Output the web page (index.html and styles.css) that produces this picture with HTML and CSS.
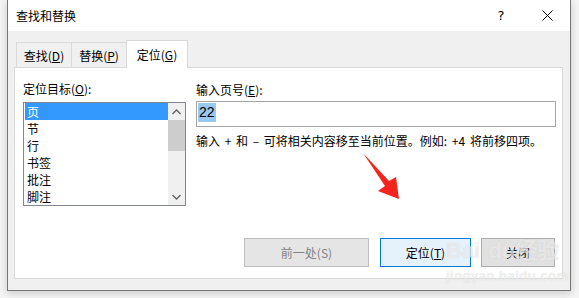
FILE: index.html
```html
<!DOCTYPE html>
<html lang="zh-CN">
<head>
    <meta charset="UTF-8">
    <title>查找和替换</title>
    <link rel="stylesheet" href="styles.css">
</head>
<body>
    <div class="dialog">
        <div class="titlebar">
            <span class="title">查找和替换</span>
            <span class="tb-btn">?</span>
            <span class="tb-btn">
                <svg width="11" height="11" viewBox="0 0 11 11"><path d="M0.5 0.5 L10.5 10.5 M10.5 0.5 L0.5 10.5" stroke="#000" stroke-width="1" fill="none"/></svg>
            </span>
        </div>
        <div class="content">
            <div class="tabs">
                <div class="tab">查找(<u>D</u>)</div>
                <div class="tab">替换(<u>P</u>)</div>
                <div class="tab active">定位(<u>G</u>)</div>
            </div>
            <div class="panel">
                <div class="fields">
                    <div class="col">
                        <div class="label">定位目标(<u>O</u>):</div>
                        <div class="listbox">
                            <ul class="items">
                                <li class="selected">页</li>
                                <li>节</li>
                                <li>行</li>
                                <li>书签</li>
                                <li>批注</li>
                                <li>脚注</li>
                            </ul>
                            <div class="scrollbar">
                                <div class="sb-arrow">
                                    <svg width="9" height="6" viewBox="0 0 9 6"><path d="M0.5 5 L4.5 1 L8.5 5" stroke="#606060" stroke-width="1.3" fill="none"/></svg>
                                </div>
                                <div class="sb-thumb"></div>
                                <div class="sb-space"></div>
                                <div class="sb-arrow">
                                    <svg width="9" height="6" viewBox="0 0 9 6"><path d="M0.5 1 L4.5 5 L8.5 1" stroke="#606060" stroke-width="1.3" fill="none"/></svg>
                                </div>
                            </div>
                        </div>
                    </div>
                    <div class="col">
                        <div class="label label-right">输入页号(<u>E</u>):</div>
                        <div class="input"><span class="sel">22</span></div>
                        <div class="hint">输入 + 和 – 可将相关内容移至当前位置。例如: +4 将前移四项。</div>
                    </div>
                </div>
                <div class="buttons">
                    <div class="btn disabled">前一处(S)</div>
                    <div class="btn primary">定位(<u>T</u>)</div>
                    <div class="btn close-btn">关闭</div>
                </div>
            </div>
        </div>
    </div>

    <svg class="arrow" width="579" height="298" viewBox="0 0 579 298">
        <polygon points="363,153 389,181 396,177 399,199 378,191 385,186" fill="#f5241c"/>
    </svg>

    <div class="watermark">
        <div class="wm-logo">Bai<span class="wm-paw">du</span>经验</div>
        <div class="wm-url">jingyan.baidu.com</div>
    </div>
</body>
</html>
```

FILE: styles.css
```css
body {
    margin: 0;
    width: 579px;
    height: 298px;
    background: #f4f4f4;
    font-family: "Noto Sans CJK SC", "Microsoft YaHei", sans-serif;
    font-size: 12px;
    color: #000;
    position: relative;
    overflow: hidden;
}
.dialog {
    box-sizing: border-box;
    margin-left: 7px;
    width: 564px;
    height: 291px;
    border: 1px solid #777;
    border-top: none;
    background: #f0f0f0;
    box-shadow: 0 2px 8px rgba(0, 0, 0, 0.18);
    display: flex;
    flex-direction: column;
}
.titlebar {
    height: 31px;
    background: #fff;
    display: flex;
    align-items: center;
    padding-left: 8px;
}
.title {
    flex: 1;
    line-height: 16px;
}
.tb-btn {
    width: 46px;
    height: 31px;
    display: flex;
    align-items: center;
    justify-content: center;
    font-family: "DejaVu Sans", sans-serif;
    font-size: 13px;
}
.content {
    flex: 1;
    padding-top: 9px;
}
.tabs {
    display: flex;
    align-items: flex-end;
    height: 27px;
    padding-left: 8px;
}
.tab {
    box-sizing: border-box;
    height: 25px;
    width: 56px;
    border: 1px solid #d9d9d9;
    border-bottom: none;
    margin-right: -1px;
    display: flex;
    align-items: center;
    justify-content: center;
    line-height: 16px;
    padding-top: 1px;
}
.tab.active {
    width: 62px;
    height: 28px;
    margin-bottom: -1px;
    background: #fff;
    position: relative;
    z-index: 1;
    padding-top: 0;
}
.panel {
    box-sizing: border-box;
    margin-left: 6px;
    width: 549px;
    height: 212px;
    border: 1px solid #d9d9d9;
    background: #fff;
    padding: 13px 7px 0 8px;
}
.fields {
    display: grid;
    grid-template-columns: 163px 360px;
    column-gap: 10px;
}
.label {
    line-height: 16px;
    margin-bottom: 5px;
}
.label-right {
    margin-top: 1px;
    margin-bottom: 3px;
}
.listbox {
    box-sizing: border-box;
    height: 104px;
    border: 1px solid #828790;
    display: flex;
}
.items {
    list-style: none;
    margin: 0;
    padding: 0 0 0 1px;
    flex: 1;
    overflow: hidden;
}
.items li {
    height: 17px;
    line-height: 17px;
    padding-left: 2px;
}
.items li.selected {
    background: #3399ff;
    color: #fff;
}
.scrollbar {
    width: 17px;
    background: #f0f0f0;
    display: flex;
    flex-direction: column;
}
.sb-arrow {
    height: 17px;
    display: flex;
    align-items: center;
    justify-content: center;
}
.sb-thumb {
    height: 31px;
    background: #cdcdcd;
}
.sb-space {
    flex: 1;
}
.input {
    box-sizing: border-box;
    height: 26px;
    border: 1px solid #a5a5a5;
    padding: 1px 0 0 1px;
}
.sel {
    display: inline-block;
    background: #99c9ef;
    font-family: "Liberation Sans", sans-serif;
    font-size: 14px;
    line-height: 19px;
    padding: 0 1px;
}
.hint {
    line-height: 16px;
    margin-top: 6px;
    word-spacing: 2px;
}
.buttons {
    display: flex;
    justify-content: flex-end;
    margin-top: 32px;
}
.btn {
    box-sizing: border-box;
    height: 29px;
    border: 1px solid #adadad;
    background: #e1e1e1;
    display: flex;
    align-items: center;
    justify-content: center;
    line-height: 16px;
}
.btn.disabled {
    width: 125px;
    border-color: #bfbfbf;
    background: #e5e5e5;
    color: #838383;
}
.btn.primary {
    width: 91px;
    margin-left: 11px;
    border-color: #0078d7;
    background: #e5f1fb;
}
.btn.close-btn {
    width: 74px;
    margin-left: 10px;
}
.arrow {
    position: absolute;
    left: 0;
    top: 0;
    pointer-events: none;
}
.watermark {
    position: absolute;
    left: 446px;
    top: 238px;
    color: rgba(255, 255, 255, 0.55);
    font-family: "Liberation Sans", sans-serif;
    font-weight: bold;
    text-shadow: 0 0 1px rgba(170, 170, 170, 0.45);
    pointer-events: none;
}
.wm-logo {
    font-size: 22px;
    line-height: 26px;
}
.wm-paw {
    margin-left: 8px;
}
.wm-url {
    font-size: 13px;
    line-height: 16px;
    margin-top: 4px;
    letter-spacing: 0.5px;
}
```
